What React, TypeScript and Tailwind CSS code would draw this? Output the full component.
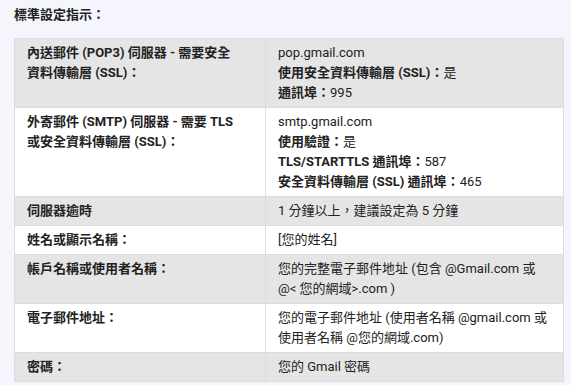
import React from "react";

interface Row {
  label: React.ReactNode;
  value: React.ReactNode;
}

const B: React.FC<{ children: React.ReactNode }> = ({ children }) => (
  <span className="font-bold">{children}</span>
);

const rows: Row[] = [
  {
    label: (
      <>
        內送郵件 (POP3) 伺服器 - 需要安全
        <br />
        資料傳輸層 (SSL)：
      </>
    ),
    value: (
      <>
        pop.gmail.com
        <br />
        <B>使用安全資料傳輸層 (SSL)：</B>是
        <br />
        <B>通訊埠：</B>995
      </>
    ),
  },
  {
    label: (
      <>
        外寄郵件 (SMTP) 伺服器 - 需要 TLS
        <br />
        或安全資料傳輸層 (SSL)：
      </>
    ),
    value: (
      <>
        smtp.gmail.com
        <br />
        <B>使用驗證：</B>是
        <br />
        <B>TLS/STARTTLS 通訊埠：</B>587
        <br />
        <B>安全資料傳輸層 (SSL) 通訊埠：</B>465
      </>
    ),
  },
  { label: "伺服器逾時", value: "1 分鐘以上，建議設定為 5 分鐘" },
  { label: "姓名或顯示名稱：", value: "[您的姓名]" },
  {
    label: "帳戶名稱或使用者名稱：",
    value: (
      <>
        您的完整電子郵件地址 (包含 @Gmail.com 或
        <br />
        @&lt; 您的網域&gt;.com )
      </>
    ),
  },
  {
    label: "電子郵件地址：",
    value: (
      <>
        您的電子郵件地址 (使用者名稱 @gmail.com 或
        <br />
        使用者名稱 @您的網域.com)
      </>
    ),
  },
  { label: "密碼：", value: "您的 Gmail 密碼" },
];

export default function App() {
  return (
    <div
      className="w-[571px] h-[385px] overflow-hidden bg-[#f5f6fd] px-[14px] pt-[5px] text-[13px] leading-[20px] text-[#222222]"
      style={{ fontFamily: 'Roboto, "Noto Sans CJK TC", sans-serif' }}
    >
      <h2 className="font-bold mb-[13px]">標準設定指示：</h2>
      <table className="w-[549px] border-collapse table-fixed">
        <colgroup>
          <col className="w-[251px]" />
          <col className="w-[298px]" />
        </colgroup>
        <tbody>
          {rows.map((row, i) => (
            <tr key={i} className={i % 2 === 0 ? "bg-[#e5e5e5]" : "bg-white"}>
              <td className="border border-[#dcdcdc] px-[12px] py-[4px] align-top font-bold">
                {row.label}
              </td>
              <td className="border border-[#dcdcdc] px-[12px] py-[4px] align-top">
                {row.value}
              </td>
            </tr>
          ))}
        </tbody>
      </table>
    </div>
  );
}
